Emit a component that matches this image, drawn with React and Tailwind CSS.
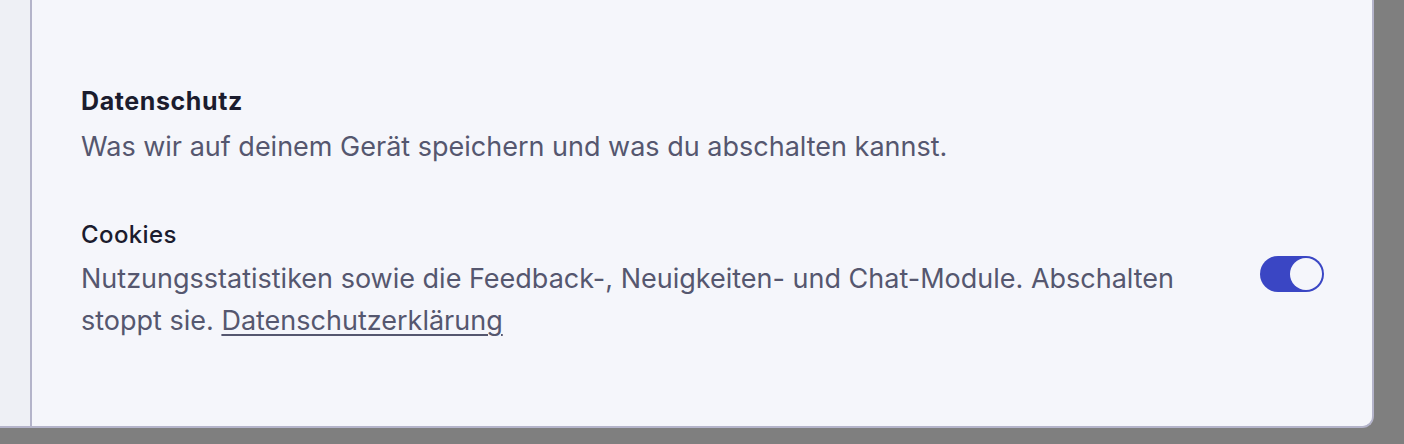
function Toggle() {
  return (
    <button
      type="button"
      role="switch"
      aria-checked="true"
      className="relative flex h-9 w-16 shrink-0 items-center rounded-full bg-[#3a46c4] p-[2px]"
    >
      <span className="ml-auto block h-8 w-8 rounded-full bg-[#f5f6fb]" />
    </button>
  );
}

function App() {
  return (
    <div className="h-[444px] w-[1404px] bg-[#7f7f7f] font-['Inter',sans-serif]">
      <div className="flex h-[428px] w-[1374px] overflow-hidden rounded-br-xl border-r-2 border-b-2 border-[#b4b4ca] bg-[#eef0f5]">
        <div className="w-[30px] shrink-0" />
        <div className="flex-1 border-l-2 border-[#b4b4ca] bg-[#f5f6fb] pt-[86px] pl-[49px] pr-[48px]">
          <h2 className="text-[25px] leading-[30px] font-bold tracking-[0.6px] text-[#1b1c2e]">Datenschutz</h2>
          <p className="mt-[10px] text-[27px] leading-[42px] text-[#55576f]">
            Was wir auf deinem Gerät speichern und was du abschalten kannst.
          </p>

          <div className="mt-[52px] flex items-start gap-6">
            <div className="flex-1">
              <h3 className="text-[24px] leading-[30px] font-medium tracking-[0.4px] text-[#1b1c2e]">Cookies</h3>
              <p className="mt-2 text-[27px] leading-[42px] text-[#55576f]">
                Nutzungsstatistiken sowie die Feedback-, Neuigkeiten- und Chat-Module. Abschalten stoppt sie.{" "}
                <a href="#" className="underline decoration-[#55576f] decoration-2 underline-offset-[4px]">
                  Datenschutzerklärung
                </a>
              </p>
            </div>
            <div className="mt-[36px]">
              <Toggle />
            </div>
          </div>
        </div>
      </div>
    </div>
  );
}

export default App;
